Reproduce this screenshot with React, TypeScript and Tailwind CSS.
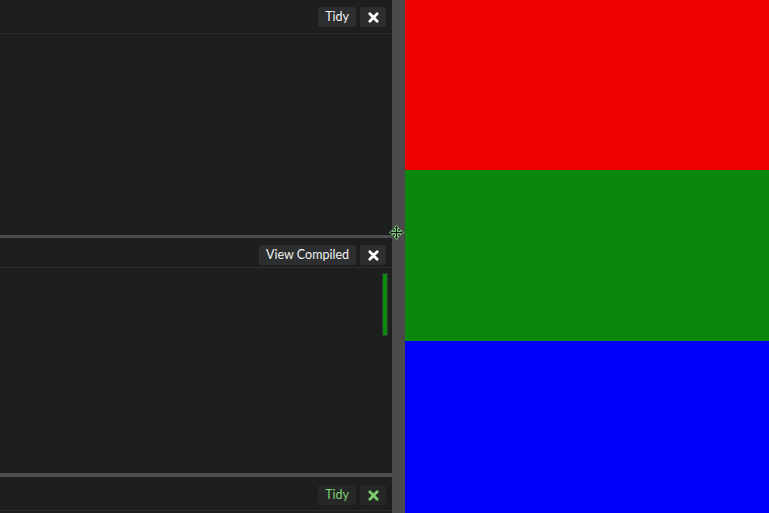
import React from "react";

function XIcon({ color }: { color: string }) {
  return (
    <svg width="11" height="11" viewBox="0 0 12 12">
      <path d="M2 2 L10 10 M10 2 L2 10" stroke={color} strokeWidth="3" strokeLinecap="round" />
    </svg>
  );
}

function Header({
  label,
  h,
  btnTop,
  green,
}: {
  label: string;
  h: string;
  btnTop: string;
  green?: boolean;
}) {
  const txt = green ? "text-[#7fcf6f]" : "text-[#f2f2f2]";
  const bg = green ? "bg-[#262827]" : "bg-[#2c2e2f]";
  return (
    <div className={`${h} ${btnTop} shrink-0 flex justify-end gap-1 pr-[6px] border-b border-[#2a2c2d]`}>
      <div className={`h-[20px] px-[7px] rounded-[3px] ${bg} ${txt} text-[12.5px] leading-[20px] flex items-center`}>
        {label}
      </div>
      <div className={`h-[20px] w-[26px] rounded-[3px] ${bg} flex items-center justify-center`}>
        <XIcon color={green ? "#7fcf6f" : "#ffffff"} />
      </div>
    </div>
  );
}

export default function App() {
  return (
    <div
      className="w-[769px] h-[513px] flex overflow-hidden bg-[#1d1f1f]"
      style={{ fontFamily: "Lato, 'Open Sans', sans-serif" }}
    >
      <div className="w-[392px] h-full flex flex-col bg-[#1d1f1f]">
        <Header label="Tidy" h="h-[34px]" btnTop="pt-[7px]" />
        <div className="h-[201px] shrink-0" />
        <div className="h-[3px] shrink-0 bg-[#4a4c4d]" />
        <Header label="View Compiled" h="h-[30px]" btnTop="pt-[7px]" />
        <div className="h-[205px] shrink-0 flex justify-end pr-[4px] pt-[5px]">
          <div className="w-[6px] h-[63px] bg-[#0a8a0a] border border-[#333537]" />
        </div>
        <div className="h-[4px] shrink-0 bg-[#4a4c4d]" />
        <Header label="Tidy" h="h-[34px]" btnTop="pt-[8px]" green />
      </div>
      <div className="relative w-[13px] h-full bg-[#4b4b4b]">
        <svg
          className="absolute left-[-3px] top-[225px]"
          width="15"
          height="15"
          viewBox="0 0 15 15"
        >
          <path
            d="M7.5 0.5 L10 3.5 L8.5 3.5 L8.5 6.5 L11.5 6.5 L11.5 5 L14.5 7.5 L11.5 10 L11.5 8.5 L8.5 8.5 L8.5 11.5 L10 11.5 L7.5 14.5 L5 11.5 L6.5 11.5 L6.5 8.5 L3.5 8.5 L3.5 10 L0.5 7.5 L3.5 5 L3.5 6.5 L6.5 6.5 L6.5 3.5 L5 3.5 Z"
            fill="#111"
            stroke="#7fd07f"
            strokeWidth="1"
          />
        </svg>
      </div>
      <div className="flex-1 h-full flex flex-col">
        <div className="h-[170px] bg-[#ec0000]" />
        <div className="h-[171px] bg-[#0b870b]" />
        <div className="flex-1 bg-[#0000fa]" />
      </div>
    </div>
  );
}
